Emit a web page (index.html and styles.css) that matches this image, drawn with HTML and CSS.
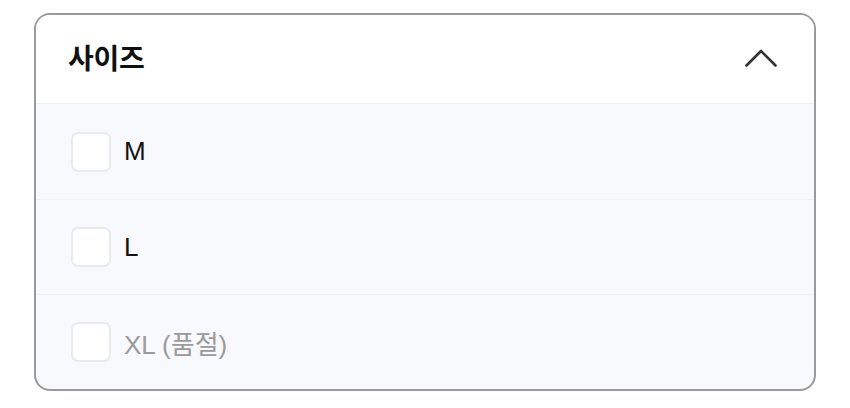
FILE: index.html
```html
<!doctype html>
<html>
<head>
    <meta charset="utf-8">
    <title>사이즈 필터</title>
    <link rel="stylesheet" href="styles.css">
</head>
<body>
	<div class="filter">
		<div class="filter-head">
			<span class="filter-title">사이즈</span>
			<svg class="chevron" width="32" height="18" viewBox="0 0 32 18">
				<path d="M1.5 16.5 L16 2 L30.5 16.5" fill="none" stroke="#333" stroke-width="2.6" stroke-linecap="round" stroke-linejoin="round"/>
			</svg>
		</div>
		<ul class="filter-list">
			<li class="option">
				<span class="box"></span>
				<span class="label">M</span>
			</li>
			<li class="option">
				<span class="box"></span>
				<span class="label">L</span>
			</li>
			<li class="option soldout">
				<span class="box"></span>
				<span class="label">XL (품절)</span>
			</li>
		</ul>
	</div>
</body>
</html>
```

FILE: styles.css
```css
*{margin: 0;padding: 0;list-style: none;box-sizing: border-box;}
body{
	padding: 13px 34px;
	font-family: "Liberation Sans", "Noto Sans CJK KR", sans-serif;
	background: #fff;
}
.filter{
	border: 2px solid #9a9a9a;
	border-radius: 16px;
	overflow: hidden;
	background: #f8f9fc;
}
.filter-head{
	height: 89px;
	display: flex;
	align-items: center;
	justify-content: space-between;
	padding: 0 37px 0 32px;
	background: #fff;
	border-bottom: 1px solid #eceef2;
}
.filter-title{
	font-family: "Noto Sans CJK KR", sans-serif;
	font-size: 28px;
	font-weight: 700;
	color: #111;
	letter-spacing: -0.3px;
	margin-top: -4px;
}
.chevron{display: block;margin-top: -2px;}
.option{
	height: 95px;
	display: flex;
	align-items: center;
	padding-left: 35px;
	gap: 13px;
	font-size: 26px;
	color: #111;
}
.option + .option{border-top: 1px solid #eff1f4;}
.box{
	width: 40px;height: 40px;
	border: 2px solid #e9eaee;
	border-radius: 7px;
	background: #fff;
}
.soldout .label{color: #9b9b9b;}
```
